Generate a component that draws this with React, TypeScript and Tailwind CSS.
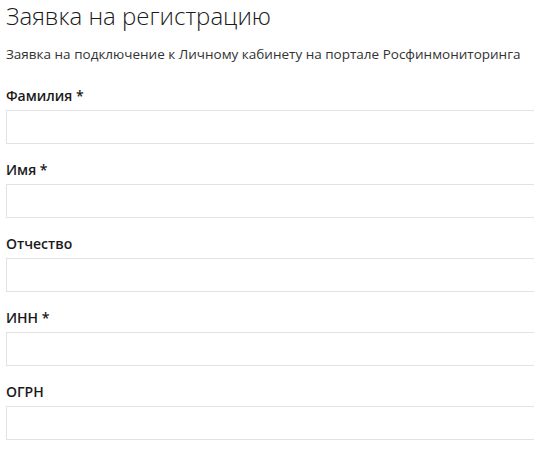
import React from 'react';

interface Field {
  id: string;
  label: string;
  required: boolean;
}

const fields: Field[] = [
  { id: 'lastName', label: 'Фамилия', required: true },
  { id: 'firstName', label: 'Имя', required: true },
  { id: 'middleName', label: 'Отчество', required: false },
  { id: 'inn', label: 'ИНН', required: true },
  { id: 'ogrn', label: 'ОГРН', required: false },
];

export default function App() {
  return (
    <div className="min-h-screen w-screen overflow-hidden bg-white text-[#222] font-['Open_Sans',sans-serif]">
      <div className="pl-1.5">
        <h1 className="text-[24px] leading-[32px] font-light text-[#1a1a1a]">
          Заявка на регистрацию
        </h1>
        <p className="mt-3 text-[13.5px] leading-5 text-[#333]">
          Заявка на подключение к Личному кабинету на портале Росфинмониторинга
        </p>

        <form className="mt-[22px] flex flex-col gap-4">
          {fields.map((f) => (
            <div key={f.id} className="flex flex-col">
              <label htmlFor={f.id} className="mb-1 text-sm leading-5 font-semibold text-[#1a1a1a]">
                {f.label}
                {f.required && ' *'}
              </label>
              <input
                id={f.id}
                type="text"
                className="h-[34px] w-[560px] border border-[#e2e2e2] bg-white px-2 text-sm outline-none"
              />
            </div>
          ))}
        </form>
      </div>
    </div>
  );
}
